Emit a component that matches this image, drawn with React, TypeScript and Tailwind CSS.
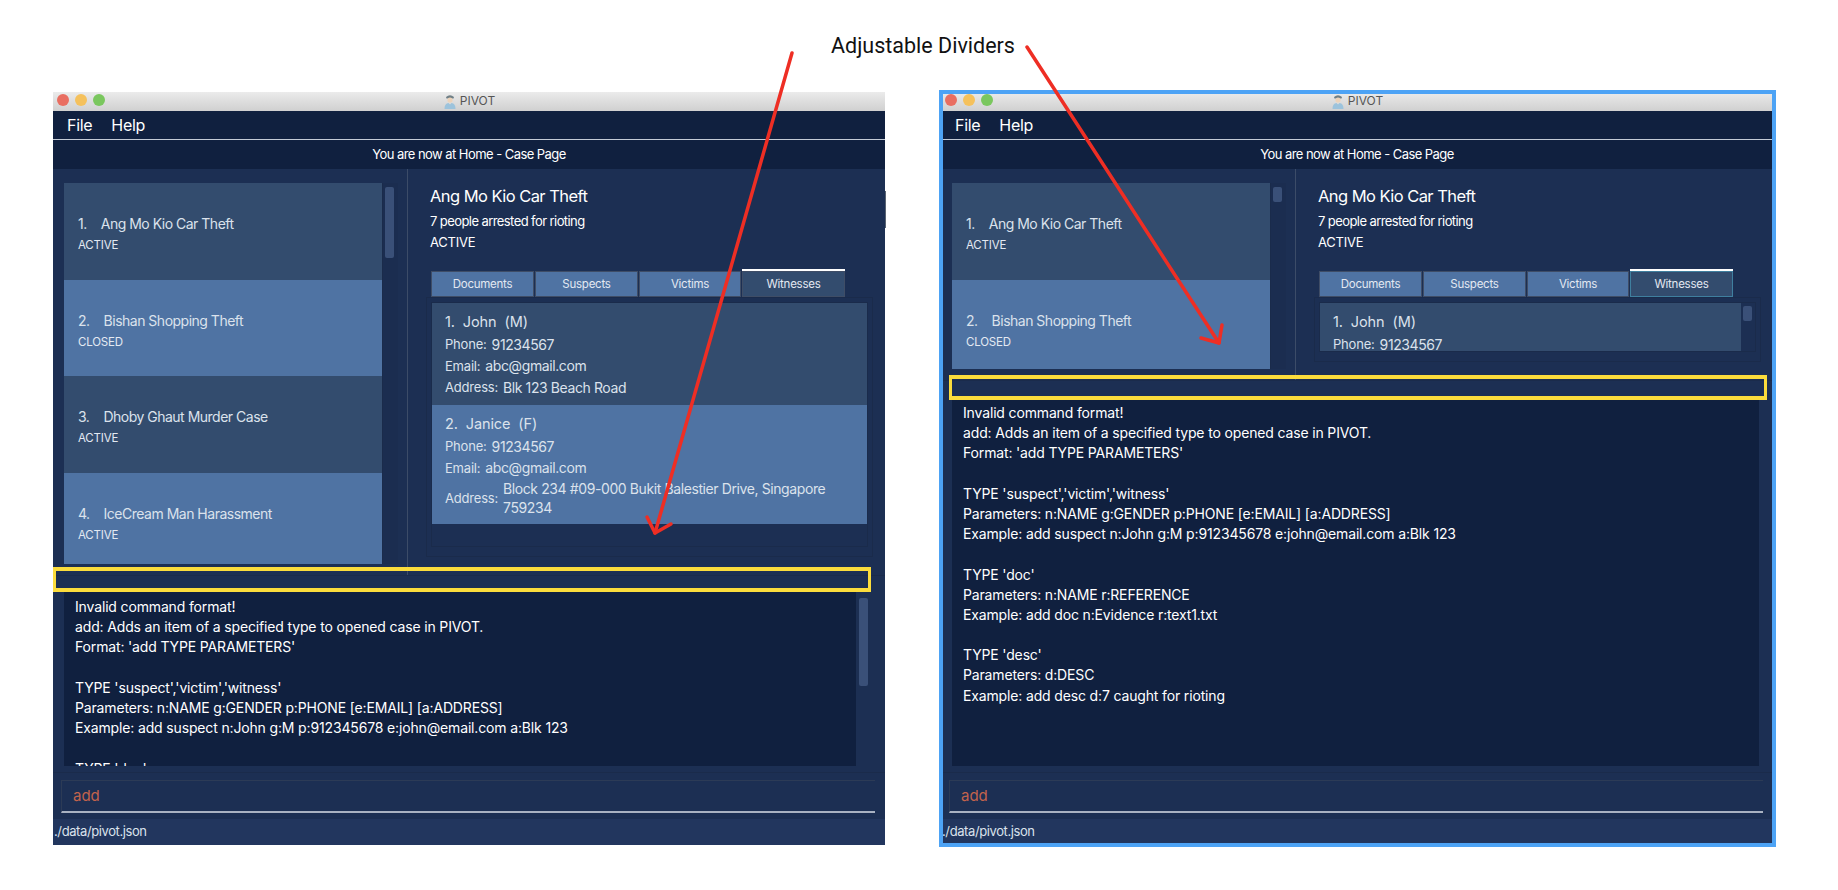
const cases = [
  { no: "1.", name: "Ang Mo Kio Car Theft", status: "ACTIVE", row: "h-[97px] bg-[#334c6e] pl-[14px] pt-[28px]" },
  { no: "2.", name: "Bishan Shopping Theft", status: "CLOSED", row: "h-[96px] bg-[#4f73a3] pl-[14px] pt-[28px]" },
  { no: "3.", name: "Dhoby Ghaut Murder Case", status: "ACTIVE", row: "h-[97px] bg-[#334c6e] pl-[14px] pt-[28px]" },
  { no: "4.", name: "IceCream Man Harassment", status: "ACTIVE", row: "h-[97px] bg-[#4f73a3] pl-[14px] pt-[28px]" },
];

const resultLines = [
  "Invalid command format!",
  "add: Adds an item of a specified type to opened case in PIVOT.",
  "Format: 'add TYPE PARAMETERS'",
  "",
  "TYPE 'suspect','victim','witness'",
  "Parameters: n:NAME g:GENDER p:PHONE [e:EMAIL] [a:ADDRESS]",
  "Example: add suspect n:John g:M p:912345678 e:john@email.com a:Blk 123",
  "",
  "TYPE 'doc'",
  "Parameters: n:NAME r:REFERENCE",
  "Example: add doc n:Evidence r:text1.txt",
  "",
  "TYPE 'desc'",
  "Parameters: d:DESC",
  "Example: add desc d:7 caught for rioting",
];

function PoliceIcon() {
  return (
    <svg width="14" height="15" viewBox="0 0 14 15" className="shrink-0">
      <path d="M3 3 Q7 -0.5 11 3 L10.5 4.5 H3.5 Z" fill="#6f7f86" />
      <circle cx="7" cy="6" r="2.6" fill="#ecd3ba" />
      <path d="M1.5 15 Q1.5 9.5 5.5 9 L7 10.5 L8.5 9 Q12.5 9.5 12.5 15 Z" fill="#9cc3dc" />
    </svg>
  );
}

function PersonRow({ label, children }: { label: string; children: React.ReactNode }) {
  return (
    <div className="flex items-center gap-[5px] text-[#dbe2ec]">
      <span className="shrink-0 text-[13px] tracking-[-0.2px]">{label}</span>
      <span className="text-[14px] leading-[18.5px] tracking-[-0.4px]">{children}</span>
    </div>
  );
}

function CaseDetails({ compact }: { compact: boolean }) {
  return (
    <div className="flex min-w-0 flex-1 flex-col pl-[22px] pr-[12px] pb-[18px]">
      <p className="mt-[15px] h-[24px] text-[16.5px] leading-[24px] tracking-[-0.55px] text-white">Ang Mo Kio Car Theft</p>
      <p className="mt-[3px] h-[20px] text-[13px] leading-[20px] tracking-[-0.58px] text-white">7 people arrested for rioting</p>
      <p className="mt-[1px] h-[20px] text-[13px] leading-[20px] tracking-[-0.2px] text-white">ACTIVE</p>

      <div className="relative ml-[1px] mt-[19px] flex h-[26px] shrink-0 gap-[1px] text-[11.5px] tracking-[-0.25px] text-[#e3e9f2]">
        <div className="flex w-[103px] items-center justify-center border border-[#3f4d66] bg-[#4f73a3] pt-[1px]">Documents</div>
        <div className="flex w-[103px] items-center justify-center border border-[#3f4d66] bg-[#4f73a3] pt-[1px]">Suspects</div>
        <div className="flex w-[102px] items-center justify-center border border-[#3f4d66] bg-[#4f73a3] pt-[1px]">Victims</div>
        <div
          className={
            compact
              ? "flex w-[103px] items-center justify-center border border-[#3f7f9f] bg-[#334c6e] pt-[1px]"
              : "flex w-[103px] items-center justify-center border border-[#3f4d66] bg-[#334c6e] pt-[1px]"
          }
        >
          Witnesses
        </div>
        <div className="absolute left-[311px] top-[-2px] h-[2px] w-[103px] bg-white" />
      </div>

      <div className="-ml-[4px] flex min-h-0 flex-1 flex-col border border-[#1a2b4b] p-[4px] pb-[9px]">
        <div className="flex min-h-0 flex-1 overflow-hidden border border-[#1a2b4b]">
          <div className="min-w-0 flex-1 overflow-hidden">
            <div className="h-[102px] bg-[#334c6e] pl-[13px] pt-[9px]">
              <p className="mb-[3px] h-[20px] whitespace-pre text-[14.5px] leading-[20px] tracking-[-0.1px] text-[#dbe2ec]">{"1.  John  (M)"}</p>
              <PersonRow label="Phone:">91234567</PersonRow>
              <div className="mt-[2px]"><PersonRow label="Email:">abc@gmail.com</PersonRow></div>
              <div className="mt-[2px]"><PersonRow label="Address:">Blk 123 Beach Road</PersonRow></div>
            </div>
            <div className="h-[119px] bg-[#4f73a3] pl-[13px] pt-[9px]">
              <p className="mb-[3px] h-[20px] whitespace-pre text-[14.5px] leading-[20px] tracking-[-0.1px] text-[#dbe2ec]">{"2.  Janice  (F)"}</p>
              <PersonRow label="Phone:">91234567</PersonRow>
              <div className="mt-[2px]"><PersonRow label="Email:">abc@gmail.com</PersonRow></div>
              <div className="mt-[2px]"><PersonRow label="Address:">Block 234 #09-000 Bukit Balestier Drive, Singapore 759234</PersonRow></div>
            </div>
          </div>
          {compact && (
            <div className="w-[14px] shrink-0 pl-[2px] pt-[3px]">
              <div className="h-[15px] w-[9px] rounded-[2px] bg-[#3a5078]" />
            </div>
          )}
        </div>
      </div>
    </div>
  );
}

function Window({ compact }: { compact: boolean }) {
  const shown = compact ? cases.slice(0, 2) : cases;
  return (
    <div className="relative flex h-[753px] w-[832px] shrink-0 flex-col bg-[#1c2f53]">
      {/* barra de título */}
      <div className="relative flex h-[19px] shrink-0 items-center justify-center gap-[3px] bg-gradient-to-b from-[#ebebeb] to-[#d0d0d0] pb-[1px]">
        <div className="absolute left-[4px] top-[2px] flex gap-[6px]">
          <span className="h-[12px] w-[12px] rounded-full bg-[#e96e61]" />
          <span className="h-[12px] w-[12px] rounded-full bg-[#f5c15c]" />
          <span className="h-[12px] w-[12px] rounded-full bg-[#7ac75e]" />
        </div>
        <PoliceIcon />
        <span className="text-[12px] text-[#555]">PIVOT</span>
      </div>

      <div className="flex h-[28px] shrink-0 items-center gap-[19px] bg-[#10203f] pl-[14px] text-[16px] tracking-[-0.3px] text-white">
        <span>File</span>
        <span>Help</span>
      </div>
      <div className="h-[1px] shrink-0 bg-[#c4cbd6]" />
      <div className="flex h-[29px] shrink-0 items-center justify-center bg-[#10203f] pt-[1px] text-[13px] tracking-[-0.55px] text-white">
        You are now at Home - Case Page
      </div>

      {/* panel superior */}
      <div className={compact ? "flex h-[211px] shrink-0" : "flex h-[406px] shrink-0"}>
        <div className="flex w-[355px] shrink-0 border-r border-[#3c4c68] pb-[11px] pl-[11px] pr-[9px] pt-[14px]">
          <div className="flex min-h-0 flex-1 overflow-hidden">
            <div className="w-[318px] shrink-0 overflow-hidden">
              {shown.map((c) => (
                <div key={c.no} className={c.row}>
                  <p className="flex h-[24px] items-center gap-[14px] text-[14px] tracking-[-0.5px] text-[#dbe2ec]">
                    <span>{c.no}</span>
                    <span>{c.name}</span>
                  </p>
                  <p className="mt-[1px] h-[18px] text-[11.5px] leading-[18px] tracking-[-0.2px] text-[#e3e9f2]">{c.status}</p>
                </div>
              ))}
            </div>
            <div className="flex-1 border-l border-[#1a2b4b] bg-[#1b2d50] pl-[2px] pt-[4px]">
              <div className={compact ? "h-[15px] w-[9px] rounded-[2px] bg-[#3a5078]" : "h-[71px] w-[9px] rounded-[2px] bg-[#3a5078]"} />
            </div>
          </div>
        </div>
        <CaseDetails compact={compact} />
      </div>

      <div className={compact ? "h-[18px] shrink-0 border-t border-[#1a2b4b]" : "h-[17px] shrink-0 border-t border-[#1a2b4b]"} />

      {/* caja de resultados */}
      <div className="mx-[11px] flex min-h-0 flex-1">
        <div
          className={
            compact
              ? "w-[807px] shrink-0 overflow-hidden bg-[#10203f] px-[11px] pt-[5px] text-[14px] leading-[20.2px] tracking-[-0.15px] text-white"
              : "w-[792px] shrink-0 overflow-hidden bg-[#10203f] px-[11px] pt-[5px] text-[14px] leading-[20.2px] tracking-[-0.15px] text-white"
          }
        >
          {resultLines.map((line, i) => (
            <p key={i} className="h-[20.2px] whitespace-pre">{line}</p>
          ))}
        </div>
        {!compact && (
          <div className="flex-1 pl-[3px] pt-[6px]">
            <div className="h-[88px] w-[9px] rounded-[2px] bg-[#3a5078]" />
          </div>
        )}
      </div>

      <div className="mt-[6px] h-[8px] shrink-0 border-t border-[#1a2b4b]" />

      {/* línea de comandos */}
      <div className="ml-[8px] mr-[10px] flex h-[33px] shrink-0 items-center border-b-2 border-l border-t border-b-[#a9b2c2] border-l-[#2c3b56] border-t-[#2c3b56] pl-[11px] text-[15px] text-[#c2634c]">
        add
      </div>
      <div className="h-[6px] shrink-0" />
      <div className="flex h-[26px] shrink-0 items-center bg-[#22365e] pl-[1px] text-[13px] tracking-[-0.4px] text-[#dbe2ec]">./data/pivot.json</div>

      {/* separador resaltado */}
      <div
        className={
          compact
            ? "absolute left-[8px] top-[283px] h-[25px] w-[818px] border-x-[3px] border-y-[4px] border-[#fbdc3c]"
            : "absolute left-0 top-[475px] h-[25px] w-[818px] border-x-[3px] border-y-[4px] border-[#fbdc3c]"
        }
      />
      {!compact && <div className="absolute -right-[1px] top-[99px] h-[37px] w-[1px] bg-[#5a6472]" />}
      {compact && <div className="absolute -bottom-[2px] -left-[2px] -right-[3px] -top-[2px] border-[4px] border-[#4da3f5]" />}
    </div>
  );
}

export default function App() {
  return (
    <div className="relative h-[890px] w-[1838px] overflow-hidden bg-white font-['Inter','Liberation_Sans',sans-serif]">
      <div className="flex h-[92px] justify-center pl-[8px] pt-[32px]">
        <span className="font-['Roboto',sans-serif] text-[21.5px] leading-[28px] text-[#111]">Adjustable Dividers</span>
      </div>
      <div className="flex gap-[56px] pl-[53px]">
        <Window compact={false} />
        <Window compact={true} />
      </div>

      <svg className="pointer-events-none absolute inset-0" width="1838" height="890" viewBox="0 0 1838 890" fill="none">
        <g stroke="#ee2e24" strokeWidth="3.5" strokeLinecap="round" strokeLinejoin="round">
          <path d="M792 53 L655 533" />
          <path d="M647 517 L655 533 L671 524" />
          <path d="M1027 47 L1219 343" />
          <path d="M1222 325 L1219 343 L1201 338" />
        </g>
      </svg>
    </div>
  );
}
